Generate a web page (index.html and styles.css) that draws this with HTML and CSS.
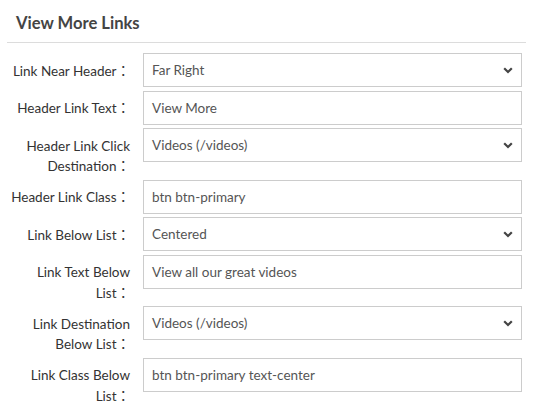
FILE: index.html
```html
<!DOCTYPE html>
<html>
<head>
<meta charset="utf-8">
<link rel="stylesheet" href="styles.css">
</head>
<body>
<div class="panel">
  <div class="panel-title">View More Links</div>
  <div class="form">
    <div class="row">
      <label class="lbl">Link Near Header：</label>
      <div class="field select"><span>Far Right</span><svg class="chev" width="10" height="7" viewBox="0 0 10 7"><path d="M1.2 1.2 L5 5 L8.8 1.2" fill="none" stroke="#444" stroke-width="2.2"/></svg></div>
    </div>
    <div class="row">
      <label class="lbl">Header Link Text：</label>
      <div class="field"><span>View More</span></div>
    </div>
    <div class="row">
      <label class="lbl">Header Link Click<br>Destination：</label>
      <div class="field select"><span>Videos (/videos)</span><svg class="chev" width="10" height="7" viewBox="0 0 10 7"><path d="M1.2 1.2 L5 5 L8.8 1.2" fill="none" stroke="#444" stroke-width="2.2"/></svg></div>
    </div>
    <div class="row">
      <label class="lbl">Header Link Class：</label>
      <div class="field"><span>btn btn-primary</span></div>
    </div>
    <div class="row">
      <label class="lbl">Link Below List：</label>
      <div class="field select"><span>Centered</span><svg class="chev" width="10" height="7" viewBox="0 0 10 7"><path d="M1.2 1.2 L5 5 L8.8 1.2" fill="none" stroke="#444" stroke-width="2.2"/></svg></div>
    </div>
    <div class="row">
      <label class="lbl">Link Text Below<br>List：</label>
      <div class="field"><span>View all our great videos</span></div>
    </div>
    <div class="row">
      <label class="lbl">Link Destination<br>Below List：</label>
      <div class="field select"><span>Videos (/videos)</span><svg class="chev" width="10" height="7" viewBox="0 0 10 7"><path d="M1.2 1.2 L5 5 L8.8 1.2" fill="none" stroke="#444" stroke-width="2.2"/></svg></div>
    </div>
    <div class="row">
      <label class="lbl">Link Class Below<br>List：</label>
      <div class="field"><span>btn btn-primary text-center</span></div>
    </div>
  </div>
</div>
</body>
</html>
```
FILE: styles.css
```css
html, body {
  margin: 0;
  padding: 0;
  background: #fff;
}
body {
  font-family: Lato, "Noto Sans CJK JP", sans-serif;
  font-size: 13.5px;
  color: #333;
}
.panel {
  width: 519px;
  margin-left: 7px;
}
.panel-title {
  height: 43px;
  box-sizing: border-box;
  padding: 13px 0 0 9px;
  font-size: 16.6px;
  font-weight: 700;
  color: #444;
  line-height: 20px;
  border-bottom: 1px solid #dcdcdc;
}
.form {
  padding-top: 10px;
}
.row {
  display: flex;
  align-items: flex-start;
  margin-bottom: 3.6px;
}
.lbl {
  width: 123px;
  flex: none;
  text-align: right;
  padding-top: 7.5px;
  line-height: 20.2px;
  color: #333;
}
.field {
  margin-left: 13px;
  width: 379px;
  height: 34px;
  box-sizing: border-box;
  border: 1px solid #ccc;
  display: flex;
  align-items: center;
  justify-content: space-between;
  padding: 0 8px;
  color: #555;
}
```
